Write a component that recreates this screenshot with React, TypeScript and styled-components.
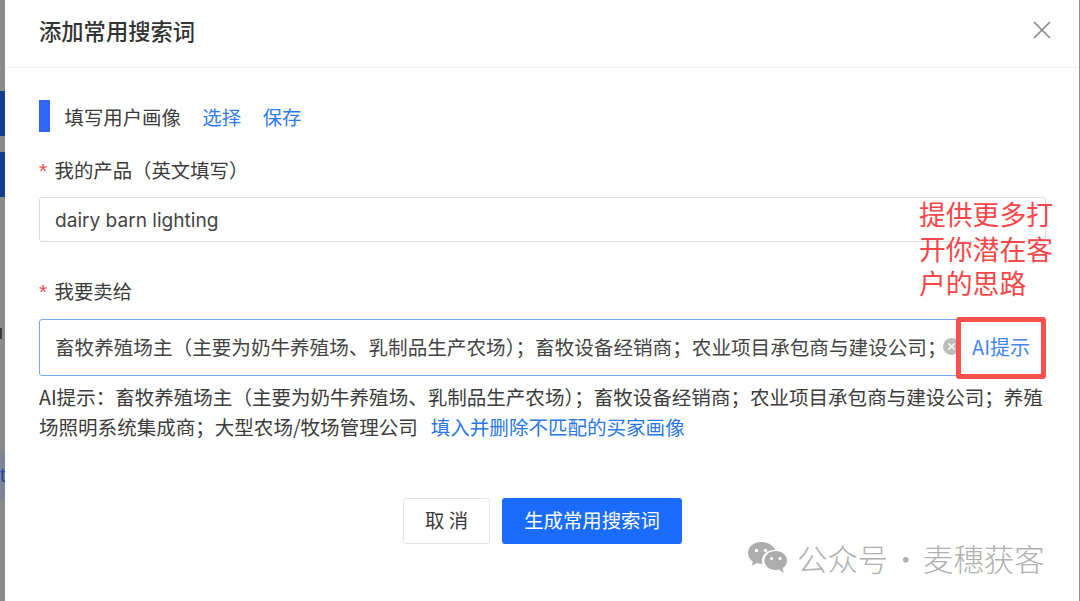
import React from 'react';
import styled, { createGlobalStyle } from 'styled-components';
import { X } from 'lucide-react';

const Global = createGlobalStyle`
  html, body { margin: 0; padding: 0; background: #fff; }
  body { font-family: "Noto Sans CJK SC", "Noto Sans", sans-serif; color: #3c3c3c; }
`;
const Page = styled.div`
  width: 1080px; height: 601px; display: flex; overflow: hidden; background: #8c8c8c; position: relative;
`;
const Backdrop = styled.div`
  width: 5px; flex: none; position: relative; background: #8b8b8b; overflow: hidden;
`;
const BackdropTab = styled.span<{ $top: number; $h: number; $color: string }>`
  position: absolute; left: 0; width: 5px; top: ${p => p.$top}px; height: ${p => p.$h}px; background: ${p => p.$color};
`;
const BackdropMark = styled.span`
  position: absolute; left: 0; top: 328px; width: 2px; height: 11px; background: #3d3d3d;
`;
const BackdropGlyph = styled.span`
  position: absolute; left: 0; top: 461px; font-size: 20px; line-height: 28px; color: #174aa6;
  font-family: "Liberation Sans", sans-serif;
`;
const Modal = styled.div`
  width: 1074px; flex: none; background: #fff; display: flex; flex-direction: column;
`;
const Header = styled.header`
  height: 68px; flex: none; display: flex; align-items: center; justify-content: space-between;
  padding: 0 22px 8px 34px; box-sizing: border-box; border-bottom: 1px solid #f3f3f3;
`;
const Title = styled.h1`
  margin: 0; font-size: 22.3px; font-weight: 500; color: #333; line-height: 30px;
`;
const Close = styled.span`
  display: flex; color: #888;
`;
const Body = styled.main`
  padding: 32px 34px 0; display: flex; flex-direction: column; flex: 1;
`;
const SectionRow = styled.div`
  display: flex; align-items: center; height: 32px; font-size: 19.4px; color: #3c3c3c;
`;
const Bar = styled.span`
  width: 11px; height: 32px; background: #2f66f6; margin-right: 14.5px;
`;
const SectionLink = styled.a`
  color: #2f7bf0; margin-left: 21.5px;
`;
const Label = styled.div<{ $mt: number }>`
  margin-top: ${p => p.$mt}px; height: 28px; display: flex; align-items: center; font-size: 19.4px; color: #3c3c3c;
`;
const Star = styled.span`
  color: #f5484a; width: 15.5px; font-size: 21px; padding-top: 4px; font-family: "Liberation Sans", sans-serif;
`;
const TextInput = styled.div`
  margin-top: 14px; width: 1007px; height: 45px; box-sizing: border-box; border: 1px solid #dedede; border-radius: 3px;
  display: flex; align-items: center; padding-left: 15px; font-size: 19.1px; color: #444;
  font-family: "Inter", "Noto Sans", sans-serif;
`;
const Overlayed = styled.div`
  position: relative; width: 1007px; margin-top: 15px;
`;
const Field = styled.div`
  height: 57px; box-sizing: border-box; border: 1px solid #77a6ef; border-radius: 3px;
  display: flex; align-items: center; padding: 0 0 2px 15px; font-size: 19.6px; color: #444;
`;
const FieldText = styled.span`
  white-space: nowrap; flex: none;
`;
const Clear = styled.span`
  width: 17px; height: 17px; border-radius: 50%; background: #bdbdbd; color: #fff; flex: none;
  display: flex; align-items: center; justify-content: center; margin-left: -4px;
`;
const HintBox = styled.div`
  position: absolute; left: 917px; top: -2px; width: 90px; height: 62px; box-sizing: border-box;
  border: 5px solid #fa5150; border-radius: 3px; background: #fff; padding-bottom: 3px;
  display: flex; align-items: center; justify-content: center;
  font-size: 20px; color: #4287f0;
`;
const Callout = styled.div`
  position: absolute; left: 880px; top: -122px; width: 140px; font-size: 26.8px; line-height: 34.5px; color: #f8474a;
`;
const Hint = styled.p`
  margin: 6px 0 0; width: 1010px; font-size: 19.55px; line-height: 30px; color: #3c3c3c;
`;
const HintAction = styled.a`
  color: #2a78e8; margin-left: 13px;
`;
const Footer = styled.div`
  display: flex; justify-content: flex-start; gap: 12px; margin-top: 56px; margin-left: 364px;
`;
const CancelButton = styled.button`
  width: 87px; height: 46px; box-sizing: border-box; background: #fff; border: 1px solid #e4e4e4; border-radius: 3px;
  font: inherit; font-size: 19.4px; color: #3c3c3c; padding: 0 0 3px;
`;
const PrimaryButton = styled.button`
  width: 180px; height: 46px; box-sizing: border-box; background: #1a6cff; border: none; border-radius: 3px;
  font: inherit; font-size: 19.4px; color: #fff; padding: 0 0 3px;
`;
const Watermark = styled.div`
  position: absolute; left: 747px; top: 540px; display: flex; align-items: center; gap: 9px;
  font-size: 30.4px; line-height: 36px; color: #b0b0b0; white-space: nowrap; font-weight: 300; word-spacing: -4.5px;
`;
const Edge = styled.div`
  width: 1px; flex: none; background: #8f8f8f;
`;

const WeChat = () => (
  <svg width="41" height="34" viewBox="0 0 41 34" fill="#adadad">
    <path d="M14 1C6.800 1 1 5.900 1 12c0 3.500 1.900 6.600 4.900 8.600L4.800 24.800l5-2.700c1.300.4 2.800.6 4.200.6.500 0 .9 0 1.400-.1-.3-1-.5-2-.5-3 0-6 5.500-10.700 12.300-10.700h1C26.300 4.500 20.700 1 14 1z" />
    <path d="M40 19.500c0-5.300-5.100-9.500-11.300-9.500S17.400 14.200 17.400 19.500 22.500 29 28.700 29c1.200 0 2.300-.2 3.400-.5l4.600 3.500-1-5c2.600-1.700 4.300-4.400 4.300-7.500z" />
    <circle cx="9.500" cy="9.500" r="1.800" fill="#fff" />
    <circle cx="18.500" cy="9.500" r="1.800" fill="#fff" />
    <circle cx="24.500" cy="17.500" r="1.600" fill="#fff" />
    <circle cx="33" cy="17.500" r="1.600" fill="#fff" />
  </svg>
);

export default function App() {
  return (
    <Page>
      <Global />
      <Backdrop>
        <BackdropTab $top={91} $h={45} $color="#123c8f" />
        <BackdropTab $top={152} $h={45} $color="#123c8f" />
        <BackdropTab $top={450} $h={50} $color="#7f8794" />
        <BackdropMark />
        <BackdropGlyph>t</BackdropGlyph>
      </Backdrop>
      <Modal>
        <Header>
          <Title>添加常用搜索词</Title>
          <Close><X size={30} strokeWidth={1.4} /></Close>
        </Header>
        <Body>
          <SectionRow>
            <Bar />
            填写用户画像
            <SectionLink>选择</SectionLink>
            <SectionLink>保存</SectionLink>
          </SectionRow>
          <Label $mt={23}><Star>*</Star>我的产品（英文填写）</Label>
          <TextInput>dairy barn lighting</TextInput>
          <Label $mt={34}><Star>*</Star>我要卖给</Label>
          <Overlayed>
            <Field>
              <FieldText>畜牧养殖场主（主要为奶牛养殖场、乳制品生产农场）；畜牧设备经销商；农业项目承包商与建设公司；</FieldText>
              <Clear><X size={11} strokeWidth={3} /></Clear>
            </Field>
            <HintBox>AI提示</HintBox>
            <Callout>提供更多打开你潜在客户的思路</Callout>
          </Overlayed>
          <Hint>
            AI提示：畜牧养殖场主（主要为奶牛养殖场、乳制品生产农场）；畜牧设备经销商；农业项目承包商与建设公司；养殖场照明系统集成商；大型农场/牧场管理公司
            <HintAction>填入并删除不匹配的买家画像</HintAction>
          </Hint>
          <Footer>
            <CancelButton>取 消</CancelButton>
            <PrimaryButton>生成常用搜索词</PrimaryButton>
          </Footer>
        </Body>
      </Modal>
      <Edge />
      <Watermark><WeChat />公众号 · 麦穗获客</Watermark>
    </Page>
  );
}
